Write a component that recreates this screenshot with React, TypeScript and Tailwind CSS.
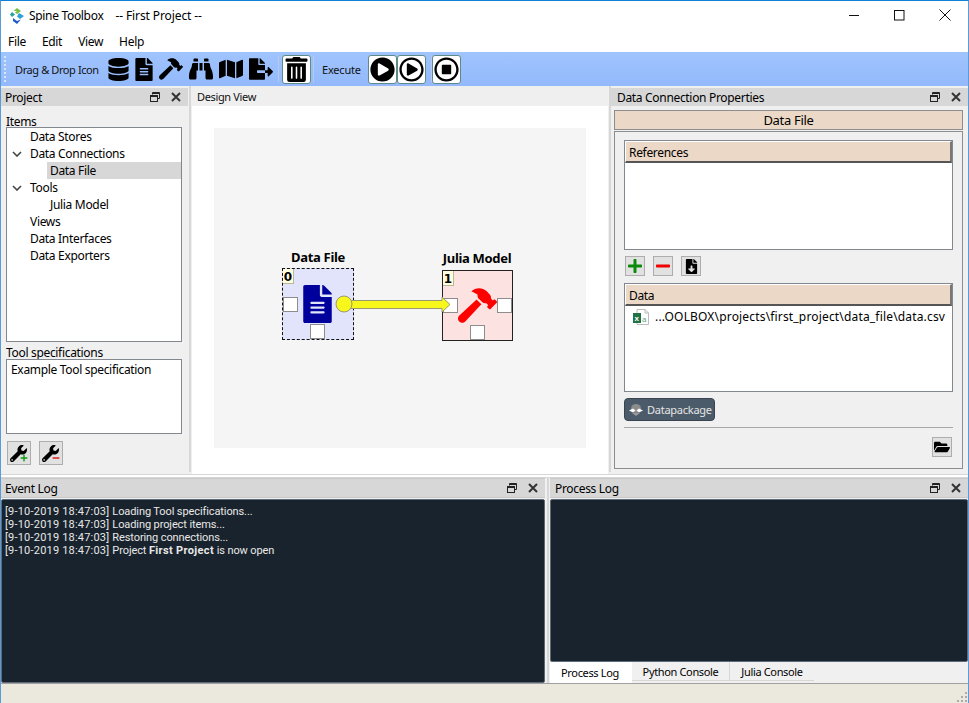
import React from "react";
import { FaDatabase, FaFileAlt, FaHammer, FaBinoculars, FaMap, FaFileExport, FaTrashAlt, FaPlayCircle, FaRegPlayCircle, FaRegStopCircle, FaWrench, FaPlus, FaMinus, FaFolderOpen, FaFileDownload } from "react-icons/fa";

function FloatIcon() {
  return (
    <svg width="12" height="12" viewBox="0 0 12 12" fill="none" stroke="#222" strokeWidth="1">
      <path d="M3.5 3.5V1.5H10.5V7.5H8.5" />
      <path d="M3.5 2.5H10.5" />
      <rect x="1.5" y="4.5" width="7" height="6" />
      <path d="M1.5 5.5H8.5" />
    </svg>
  );
}
function CloseIcon() {
  return (
    <svg width="12" height="12" viewBox="0 0 12 12" stroke="#333" strokeWidth="2">
      <path d="M2 2L10 10M10 2L2 10" />
    </svg>
  );
}
function DockHeader({ title, cls = "pl-[5px]" }: { title: string; cls?: string }) {
  return (
    <div className={"flex h-[18px] items-center justify-between bg-[#d7d7d7] pr-[6px] " + cls}>
      <span className="pt-px">{title}</span>
      <span className="flex items-center gap-[9px]">
        <FloatIcon />
        <CloseIcon />
      </span>
    </div>
  );
}
function ToolBtn({ children, cls = "" }: { children: React.ReactNode; cls?: string }) {
  return (
    <div className={"flex h-[29px] w-[29px] items-center justify-center rounded-[3px] border border-[#5f8a8a] bg-white " + cls}>
      {children}
    </div>
  );
}
function SqBtn({ children, cls = "w-[20px] h-[20px]" }: { children: React.ReactNode; cls?: string }) {
  return <div className={"flex items-center justify-center border border-[#adadad] bg-[#e1e1e1] " + cls}>{children}</div>;
}
function TreeRow({ label, expanded, indent, selected }: { label: string; expanded?: boolean; indent?: boolean; selected?: boolean }) {
  return (
    <div className="relative flex h-[17px] items-center">
      {expanded && (
        <svg className="ml-[5px]" width="10" height="6" viewBox="0 0 10 6" fill="none" stroke="#444" strokeWidth="1.6">
          <path d="M1 1L5 5L9 1" />
        </svg>
      )}
      <div className={(expanded ? "ml-[8px] " : "ml-[23px] ") + (indent ? "ml-[40px] flex-1 pl-[3px] " : "") + (selected ? "h-[17px] bg-[#d7d7d7] leading-[17px]" : "")}>{label}</div>
    </div>
  );
}
function Port({ cls }: { cls: string }) {
  return <div className={"absolute h-[15px] w-[15px] border border-[#8d8d8d] bg-white " + cls} />;
}
function Badge({ n }: { n: string }) {
  return <div className="absolute left-0 top-0 flex h-[15px] w-[11px] items-center justify-center border-b border-r border-[#b9b99a] bg-[#ffffe0] pt-px font-['DejaVu_Sans',sans-serif] text-[12px] font-bold leading-none tracking-normal">{n}</div>;
}
function TableHead({ title }: { title: string }) {
  return (
    <div className="flex h-[22px] items-center border-b-2 border-r-2 border-b-[#555] border-r-[#777] border-l border-t border-l-white border-t-white bg-[#ecd8c6] pl-[3px] pt-[3px]">
      {title}
    </div>
  );
}
function LogoIcon() {
  return (
    <svg width="14" height="16" viewBox="0 0 14 16">
      <path d="M7 0L11 3L7 6L5 4.5L7 3L3.5 3Z" fill="#7ac143" />
      <path d="M2 4L5 6.500L2 9L0 6.500Z" fill="#26a69a" />
      <path d="M9 5L14 8L10 11L7 8.500Z" fill="#2e9fd8" />
      <path d="M3 10L7 13L11 11.500L7 16L3 13Z" fill="#1d5fc4" />
    </svg>
  );
}
function ExcelIcon() {
  return (
    <svg width="16" height="16" viewBox="0 0 16 16">
      <path d="M4 .5H12L15.500 4V15.500H4Z" fill="#fff" stroke="#bcbcbc" />
      <path d="M12 .5V4H15.500" fill="none" stroke="#bcbcbc" />
      <rect x="0" y="4" width="8" height="10" fill="#217346" />
      <text x="1.500" y="11.500" fontSize="8" fontWeight="700" fill="#fff" fontFamily="Liberation Sans">x</text>
      <text x="9" y="13" fontSize="8" fill="#5fa67f" fontFamily="Liberation Sans">a</text>
    </svg>
  );
}
function PackageIcon() {
  return (
    <svg width="14" height="12" viewBox="0 0 14 12">
      <ellipse cx="7" cy="4.500" rx="5" ry="4.500" fill="#8c8c8c" />
      <path d="M0 6.500L4 4.500L6.500 6.500L4 8.500Z" fill="#fff" />
      <path d="M14 6.500L10 4.500L7.500 6.500L10 8.500Z" fill="#fff" />
      <path d="M3 9H11L7 12Z" fill="#9a9a9a" />
    </svg>
  );
}
function LogLine({ children }: { children: React.ReactNode }) {
  return (
    <div className="h-[13px] whitespace-nowrap">
      <span className="tracking-[0.2px]">[9-10-2019 18:47:03]</span>
      <span className="ml-[3px]">{children}</span>
    </div>
  );
}

export default function App() {
  return (
    <div className="flex h-[703px] w-[969px] flex-col overflow-hidden border-x border-t border-x-[#5a9ad8] border-t-[#0f80d8] bg-[#f0f0f0] font-['Noto_Sans','Liberation_Sans',sans-serif] text-[12px] leading-[16px] tracking-[-0.32px] text-black">
      {/* Title bar */}
      <div className="flex h-[30px] shrink-0 items-center bg-white pl-[9px]">
        <LogoIcon />
        <span className="ml-[5px]">Spine Toolbox</span>
        <span className="ml-[12px] tracking-[-0.1px]">-- First Project --</span>
        <div className="mb-[2px] ml-auto flex items-center">
          <svg width="12" height="12" viewBox="0 0 12 12" stroke="#111" className="mr-[34px]"><path d="M1 6.500H11" /></svg>
          <svg width="11" height="11" viewBox="0 0 11 11" fill="none" stroke="#111" className="mr-[34px]"><rect x=".5" y=".5" width="9.500" height="9.500" /></svg>
          <svg width="12" height="12" viewBox="0 0 12 12" stroke="#111" className="mr-[17px]"><path d="M.5 .5L11.500 11.500M11.500 .5L.5 11.500" /></svg>
        </div>
      </div>
      {/* Menu */}
      <div className="flex h-[21px] shrink-0 items-center gap-[16px] bg-white pl-[7px]">
        <span>File</span><span>Edit</span><span>View</span><span>Help</span>
      </div>
      {/* Toolbar */}
      <div className="flex h-[34px] shrink-0 items-center bg-gradient-to-b from-[#a0c4fd] to-[#93b9fc] pl-[3px]">
        <div className="h-[26px] w-[2px] border-l-2 border-dotted border-l-[#dbe6f5]" />
        <span className="ml-[9px] w-[84px] whitespace-nowrap pt-[2px] text-[11px] tracking-[-0.4px] text-[#111]">Drag &amp; Drop Icon</span>
        <div className="ml-[9px] flex items-center">
          <FaDatabase size={23} className="ml-0 w-[21px]" />
          <FaFileAlt size={23} className="ml-[6px] w-[18px]" />
          <FaHammer size={24} className="ml-[6px]" />
          <FaBinoculars size={24} className="ml-[6px]" />
          <FaMap size={24} className="ml-[6px]" />
          <FaFileExport size={24} className="ml-[6px] mr-[4px]" />
        </div>
        <div className="mx-[1px] h-[26px] w-px bg-[#b5cbe8]" />
        <ToolBtn cls="ml-[2px]"><FaTrashAlt size={25} /></ToolBtn>
        <div className="ml-[2px] h-[26px] w-px bg-[#b5cbe8]" />
        <span className="ml-[8px] w-[46px] pt-[2px] text-[11px] tracking-[-0.2px] text-[#111]">Execute</span>
        <ToolBtn><FaPlayCircle size={25} /></ToolBtn>
        <ToolBtn><FaRegPlayCircle size={25} /></ToolBtn>
        <div className="ml-[5px] h-[26px] w-px bg-[#b5cbe8]" />
        <ToolBtn><FaRegStopCircle size={25} /></ToolBtn>
      </div>
      {/* Top docks */}
      <div className="flex h-[388px] shrink-0">
        {/* Project dock */}
        <div className="flex w-[187px] shrink-0 flex-col pt-[2px]">
          <DockHeader title="Project" cls="pl-[4px]" />
          <div className="flex flex-1 flex-col pl-[5px] pr-[6px] pt-[8px]">
            <div className="h-[13px] leading-[15px]">Items</div>
            <div className="h-[215px] border border-[#828790] bg-white">
              <TreeRow label="Data Stores" />
              <TreeRow label="Data Connections" expanded />
              <TreeRow label="Data File" indent selected />
              <TreeRow label="Tools" expanded />
              <TreeRow label="Julia Model" indent />
              <TreeRow label="Views" />
              <TreeRow label="Data Interfaces" />
              <TreeRow label="Data Exporters" />
            </div>
            <div className="mt-[4px] h-[13px] leading-[13px]">Tool specifications</div>
            <div className="h-[75px] border border-[#828790] bg-white pl-[4px] pt-[2px]">Example Tool specification</div>
            <div className="mt-[7px] flex gap-[8px] pl-[1px]">
              <SqBtn cls="relative h-[24px] w-[24px]">
                <FaWrench size={17} className="-translate-x-[1px]" />
                <FaPlus size={8} className="absolute bottom-[2px] right-[2px] text-[#1a9a1a]" />
              </SqBtn>
              <SqBtn cls="relative h-[24px] w-[24px]">
                <FaWrench size={17} className="-translate-x-[1px]" />
                <FaMinus size={8} className="absolute bottom-[2px] right-[2px] text-[#e02020]" />
              </SqBtn>
            </div>
          </div>
        </div>
        <div className="mx-[1px] mb-[2px] w-[2px] bg-[#d7d7d7]" />
        {/* Design view */}
        <div className="flex w-[416px] shrink-0 flex-col">
          <div className="flex h-[20px] items-center bg-[#efefef] pl-[5px] pt-[2px] text-[11px] tracking-[-0.35px] text-[#111]">Design View</div>
          <div className="flex-1 bg-white pl-[22px] pt-[22px]">
            <div className="relative h-[320px] w-[372px] bg-[#f5f5f5]">
              <div className="absolute left-[68px] top-[121px] w-[72px] text-center text-[13px] font-bold">Data File</div>
              <div className="absolute left-[218px] top-[122px] w-[90px] text-center text-[13px] font-bold">Julia Model</div>
              <div className="absolute left-[68px] top-[140px] h-[72px] w-[72px] border border-dashed border-[#111] bg-[#e2e4fb]">
                <Badge n="0" />
                <Port cls="left-0 top-[28px]" />
                <Port cls="left-[27px] bottom-0" />
                <FaFileAlt className="absolute left-[20px] top-[16px] h-[38px] w-[29px] text-[#00009c]" />
              </div>
              <div className="absolute left-[228px] top-[142px] h-[71px] w-[71px] border border-[#222] bg-[#fde2e2]">
                <Badge n="1" />
                <Port cls="left-0 top-[27px]" />
                <Port cls="right-0 top-[27px]" />
                <Port cls="left-[27px] bottom-0" />
                <FaHammer size={39} className="absolute left-[15px] top-[15px] text-[#ff0000]" />
              </div>
              <svg className="absolute left-[120px] top-[166px]" width="120" height="22" viewBox="0 0 120 22">
                <path d="M16 6.500H108V3L116 10.500L108 18V14.500H16Z" fill="#f7f71c" stroke="#9a9a70" strokeWidth="1" />
                <circle cx="10" cy="10" r="8" fill="#f7f71c" stroke="#9a9a70" strokeWidth="1" />
              </svg>
            </div>
          </div>
        </div>
        <div className="ml-[1px] mb-[2px] w-[2px] bg-[#d7d7d7]" />
        {/* Properties dock */}
        <div className="flex min-w-0 flex-1 flex-col pt-[2px]">
          <DockHeader title="Data Connection Properties" cls="pl-[6px]" />
          <div className="flex flex-1 flex-col pb-[5px] pl-[3px] pr-[5px] pt-[4px]">
            <div className="flex h-[20px] items-center justify-center border border-[#8d8d8d] bg-[#ecd8c6] text-[13px] tracking-[-0.3px]">Data File</div>
            <div className="mt-[1px] flex flex-1 flex-col border border-[#8d8d8d] bg-[#f0f0f0] px-[9px] pt-[8px]">
              <div className="h-[110px] border border-[#828790] bg-white"><TableHead title="References" /></div>
              <div className="mt-[6px] flex gap-[8px] pl-px">
                <SqBtn><FaPlus size={16} className="text-[#0b8a0b]" /></SqBtn>
                <SqBtn><FaMinus size={16} className="text-[#f00000]" /></SqBtn>
                <SqBtn><FaFileDownload size={15} /></SqBtn>
              </div>
              <div className="mt-[7px] h-[109px] border border-[#828790] bg-white">
                <TableHead title="Data" />
                <div className="flex items-center pl-[8px] pt-[2px]">
                  <ExcelIcon />
                  <span className="ml-[6px] whitespace-nowrap pt-px tracking-[0.17px]">...OOLBOX\projects\first_project\data_file\data.csv</span>
                </div>
              </div>
              <div className="mt-[6px] flex h-[23px] w-[91px] items-center rounded-[4px] border border-[#3a4450] bg-[#4c5b69] pl-[4px] text-[11px] tracking-[-0.25px] text-[#e6e6e6]">
                <PackageIcon />
                <span className="ml-[4px]">Datapackage</span>
              </div>
              <div className="mt-[6px] h-px bg-[#a8a8a8]" />
              <div className="mt-[9px] flex justify-end pr-px">
                <SqBtn><FaFolderOpen size={16} /></SqBtn>
              </div>
            </div>
          </div>
        </div>
      </div>
      {/* Splitter */}
      <div className="h-[4px] shrink-0 border-b border-t border-[#d7d7d7] bg-white" />
      {/* Bottom docks */}
      <div className="flex h-[205px] shrink-0">
        <div className="flex w-[544px] shrink-0 flex-col">
          <DockHeader title="Event Log" cls="h-[20px] border-y border-y-[#c8c8c8] pl-[4px]" />
          <div className="mt-px flex-1 rounded-[2px] border border-[#5d6b78] bg-[#19232d] pl-[3px] pt-[5px] font-['Roboto','Liberation_Sans',sans-serif] text-[11px] leading-[13px] tracking-[-0.1px] text-[#e8e8e8]">
            <LogLine>Loading Tool specifications...</LogLine>
            <LogLine>Loading project items...</LogLine>
            <LogLine>Restoring connections...</LogLine>
            <LogLine>Project <b className="tracking-[0.35px]">First Project</b> is now open</LogLine>
          </div>
        </div>
        <div className="ml-[2px] mr-[1px] w-[2px] bg-[#d7d7d7]" />
        <div className="flex min-w-0 flex-1 flex-col">
          <DockHeader title="Process Log" cls="h-[20px] border-y border-y-[#c8c8c8] pl-[5px]" />
          <div className="mt-px h-[163px] rounded-[2px] border border-[#5d6b78] bg-[#19232d]" />
          <div className="flex h-[21px] bg-[#f0f0f0] text-[11px] tracking-[-0.35px]">
            <div className="flex w-[82px] items-center justify-center bg-white pr-[2px]">Process Log</div>
            <div className="flex h-[19px] w-[98px] items-center justify-center border-b border-r border-[#d7d7d7] pt-[2px]">Python Console</div>
            <div className="flex h-[19px] w-[84px] items-center justify-center border-b border-[#d7d7d7] pt-[2px]">Julia Console</div>
          </div>
        </div>
      </div>
      {/* Status bar */}
      <div className="relative flex-1 border-t border-[#a0a0a0] bg-[#ebe9dd]">
        <svg className="absolute bottom-[1px] right-[1px]" width="10" height="10" viewBox="0 0 10 10" fill="#aaa">
          <rect x="8" y="8" width="2" height="2" /><rect x="4" y="8" width="2" height="2" /><rect x="0" y="8" width="2" height="2" />
          <rect x="8" y="4" width="2" height="2" /><rect x="4" y="4" width="2" height="2" /><rect x="8" y="0" width="2" height="2" />
        </svg>
      </div>
    </div>
  );
}
